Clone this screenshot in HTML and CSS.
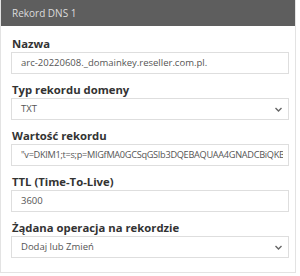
FILE: index.html
```html
<!DOCTYPE html>
<html lang="pl">
<head>
<meta charset="utf-8">
<link rel="stylesheet" href="styles.css">
</head>
<body>
<div class="panel">
  <div class="head">Rekord DNS 1</div>
  <div class="body">
    <div class="field">
      <div class="label">Nazwa</div>
      <div class="input">arc-20220608._domainkey.reseller.com.pl.</div>
    </div>
    <div class="field">
      <div class="label">Typ rekordu domeny</div>
      <div class="input select"><span>TXT</span><svg class="chev" width="7" height="5" viewBox="0 0 7 5"><path d="M0.5 1 L3.5 4 L6.5 1" fill="none" stroke="#666" stroke-width="1.4"/></svg></div>
    </div>
    <div class="field">
      <div class="label">Wartość rekordu</div>
      <div class="input"><div class="clip">"v=DKIM1;t=s;p=MIGfMA0GCSqGSIb3DQEBAQUAA4GNADCBiQKBgQC</div></div>
    </div>
    <div class="field">
      <div class="label">TTL (Time-To-Live)</div>
      <div class="input">3600</div>
    </div>
    <div class="field">
      <div class="label">Żądana operacja na rekordzie</div>
      <div class="input select"><span>Dodaj lub Zmień</span><svg class="chev" width="7" height="5" viewBox="0 0 7 5"><path d="M0.5 1 L3.5 4 L6.5 1" fill="none" stroke="#666" stroke-width="1.4"/></svg></div>
    </div>
  </div>
</div>
</body>
</html>
```
FILE: styles.css
```css
html, body {
  margin: 0;
  padding: 0;
  background: #fff;
}
body {
  font-family: "Open Sans", "DejaVu Sans", sans-serif;
}
.panel {
  width: 294px;
  height: 272px;
  border: 1px solid #e3e3e3;
  border-top: none;
}
.head {
  height: 26px;
  background: #5e5e5e;
  color: #dcdcdc;
  font-size: 10px;
  line-height: 26px;
  padding-left: 11px;
}
.body {
  padding: 11px 6px 0 10px;
}
.field {
  margin-bottom: 9px;
}
.label {
  font-size: 11.3px;
  font-weight: 700;
  color: #333;
  line-height: 14px;
  margin-bottom: 1px;
  padding-left: 1px;
}
.input {
  height: 20px;
  border: 1px solid #dedede;
  font-size: 9.5px;
  line-height: 20px;
  color: #555;
  padding: 0 9px;
  white-space: nowrap;
  overflow: hidden;
}
.clip {
  overflow: hidden;
  margin-right: -4px;
  font-size: 9.2px;
  letter-spacing: -0.3px;
}
.select {
  display: flex;
  align-items: center;
  justify-content: space-between;
  padding-right: 6px;
}
.chev {
  display: block;
}
```
